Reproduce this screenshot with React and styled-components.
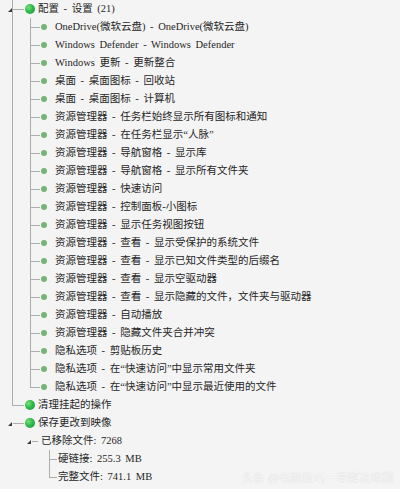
import React from 'react'
import styled, { createGlobalStyle } from 'styled-components'

const GlobalStyle = createGlobalStyle`
  html, body {
    margin: 0;
    padding: 0;
    background: #f4f4f4;
  }
  body {
    overflow: hidden;
  }
`

const Page = styled.div`
  position: relative;
  width: 400px;
  height: 489px;
  overflow: hidden;
  background: #f4f4f4;
  font-family: 'Liberation Serif', 'Noto Sans CJK SC', serif;
  font-size: 10.5px;
  color: #262626;
`

const Tree = styled.ul`
  margin: 0;
  padding: 0;
  list-style: none;
`

const Item = styled.li`
  position: relative;
  list-style: none;

  &::before {
    content: '';
    position: absolute;
    left: ${(p) => p.$lineX}px;
    top: 0;
    border-left: 1px solid #adadad;
    ${(p) =>
      p.$line === 'full'
        ? 'bottom: 0;'
        : p.$line === 'half'
        ? 'height: 9px;'
        : 'display: none;'}
  }
`

const Row = styled.div`
  position: relative;
  display: flex;
  align-items: center;
  height: 18px;
  line-height: 18px;
  padding-left: ${(p) => p.$indent}px;
  white-space: nowrap;

  &::after {
    content: '';
    position: absolute;
    left: ${(p) => p.$lineX}px;
    width: ${(p) => p.$stub}px;
    top: 9px;
    border-top: 1px solid #adadad;
  }
`

const Expander = styled.span`
  position: absolute;
  left: ${(p) => p.$x}px;
  top: 8px;
  width: 0;
  height: 0;
  border-left: 4px solid transparent;
  border-bottom: 4px solid #3a3a3a;
  z-index: 1;
`

const BigDot = styled.span`
  flex: none;
  width: 10px;
  height: 10px;
  border-radius: 50%;
  margin-right: 3px;
  background: radial-gradient(circle at 35% 35%, #7be07b 0%, #2fba4a 45%, #16913a 100%);
`

const SmallDot = styled.span`
  flex: none;
  width: 6px;
  height: 6px;
  border-radius: 50%;
  margin-right: 8px;
  background: #74b474;
`

const Label = styled.span`
  word-spacing: 2px;
`

const Watermark = styled.div`
  position: absolute;
  right: 6px;
  bottom: 4px;
  font-family: 'Noto Sans CJK SC', sans-serif;
  font-size: 11px;
  color: rgba(255, 255, 255, 0.85);
  text-shadow: 0 0 1px rgba(120, 120, 120, 0.35);
  letter-spacing: 0.5px;
`

const settings = [
  'OneDrive(微软云盘) - OneDrive(微软云盘)',
  'Windows Defender - Windows Defender',
  'Windows 更新 - 更新整合',
  '桌面 - 桌面图标 - 回收站',
  '桌面 - 桌面图标 - 计算机',
  '资源管理器 - 任务栏始终显示所有图标和通知',
  '资源管理器 - 在任务栏显示“人脉”',
  '资源管理器 - 导航窗格 - 显示库',
  '资源管理器 - 导航窗格 - 显示所有文件夹',
  '资源管理器 - 快速访问',
  '资源管理器 - 控制面板-小图标',
  '资源管理器 - 显示任务视图按钮',
  '资源管理器 - 查看 - 显示受保护的系统文件',
  '资源管理器 - 查看 - 显示已知文件类型的后缀名',
  '资源管理器 - 查看 - 显示空驱动器',
  '资源管理器 - 查看 - 显示隐藏的文件，文件夹与驱动器',
  '资源管理器 - 自动播放',
  '资源管理器 - 隐藏文件夹合并冲突',
  '隐私选项 - 剪贴板历史',
  '隐私选项 - 在“快速访问”中显示常用文件夹',
  '隐私选项 - 在“快速访问”中显示最近使用的文件',
]

const sizes = ['硬链接: 255.3 MB', '完整文件: 741.1 MB']

function App() {
  return (
    <Page>
      <GlobalStyle />
      <Tree>
        <Item $lineX={12} $line="full">
          <Row $indent={25} $lineX={12} $stub={12}>
            <Expander $x={8} />
            <BigDot />
            <Label>配置 - 设置 (21)</Label>
          </Row>
          <Tree>
            {settings.map((text, i) => (
              <Item
                key={text}
                $lineX={30}
                $line={i === settings.length - 1 ? 'half' : 'full'}
              >
                <Row $indent={41} $lineX={30} $stub={10}>
                  <SmallDot />
                  <Label>{text}</Label>
                </Row>
              </Item>
            ))}
          </Tree>
        </Item>

        <Item $lineX={12} $line="half">
          <Row $indent={25} $lineX={12} $stub={12}>
            <BigDot />
            <Label>清理挂起的操作</Label>
          </Row>
        </Item>

        <Item $lineX={12} $line="none">
          <Row $indent={25} $lineX={13} $stub={11}>
            <Expander $x={8} />
            <BigDot />
            <Label>保存更改到映像</Label>
          </Row>
          <Tree>
            <Item $lineX={30} $line="none">
              <Row $indent={41} $lineX={32} $stub={6}>
                <Expander $x={27} />
                <Label>已移除文件: 7268</Label>
              </Row>
              <Tree>
                {sizes.map((text, i) => (
                  <Item
                    key={text}
                    $lineX={49}
                    $line={i === sizes.length - 1 ? 'half' : 'full'}
                  >
                    <Row $indent={58} $lineX={49} $stub={8}>
                      <Label>{text}</Label>
                    </Row>
                  </Item>
                ))}
              </Tree>
            </Item>
          </Tree>
        </Item>
      </Tree>
      <Watermark>头条 @电脑技巧一举解决难题</Watermark>
    </Page>
  )
}

export default App
